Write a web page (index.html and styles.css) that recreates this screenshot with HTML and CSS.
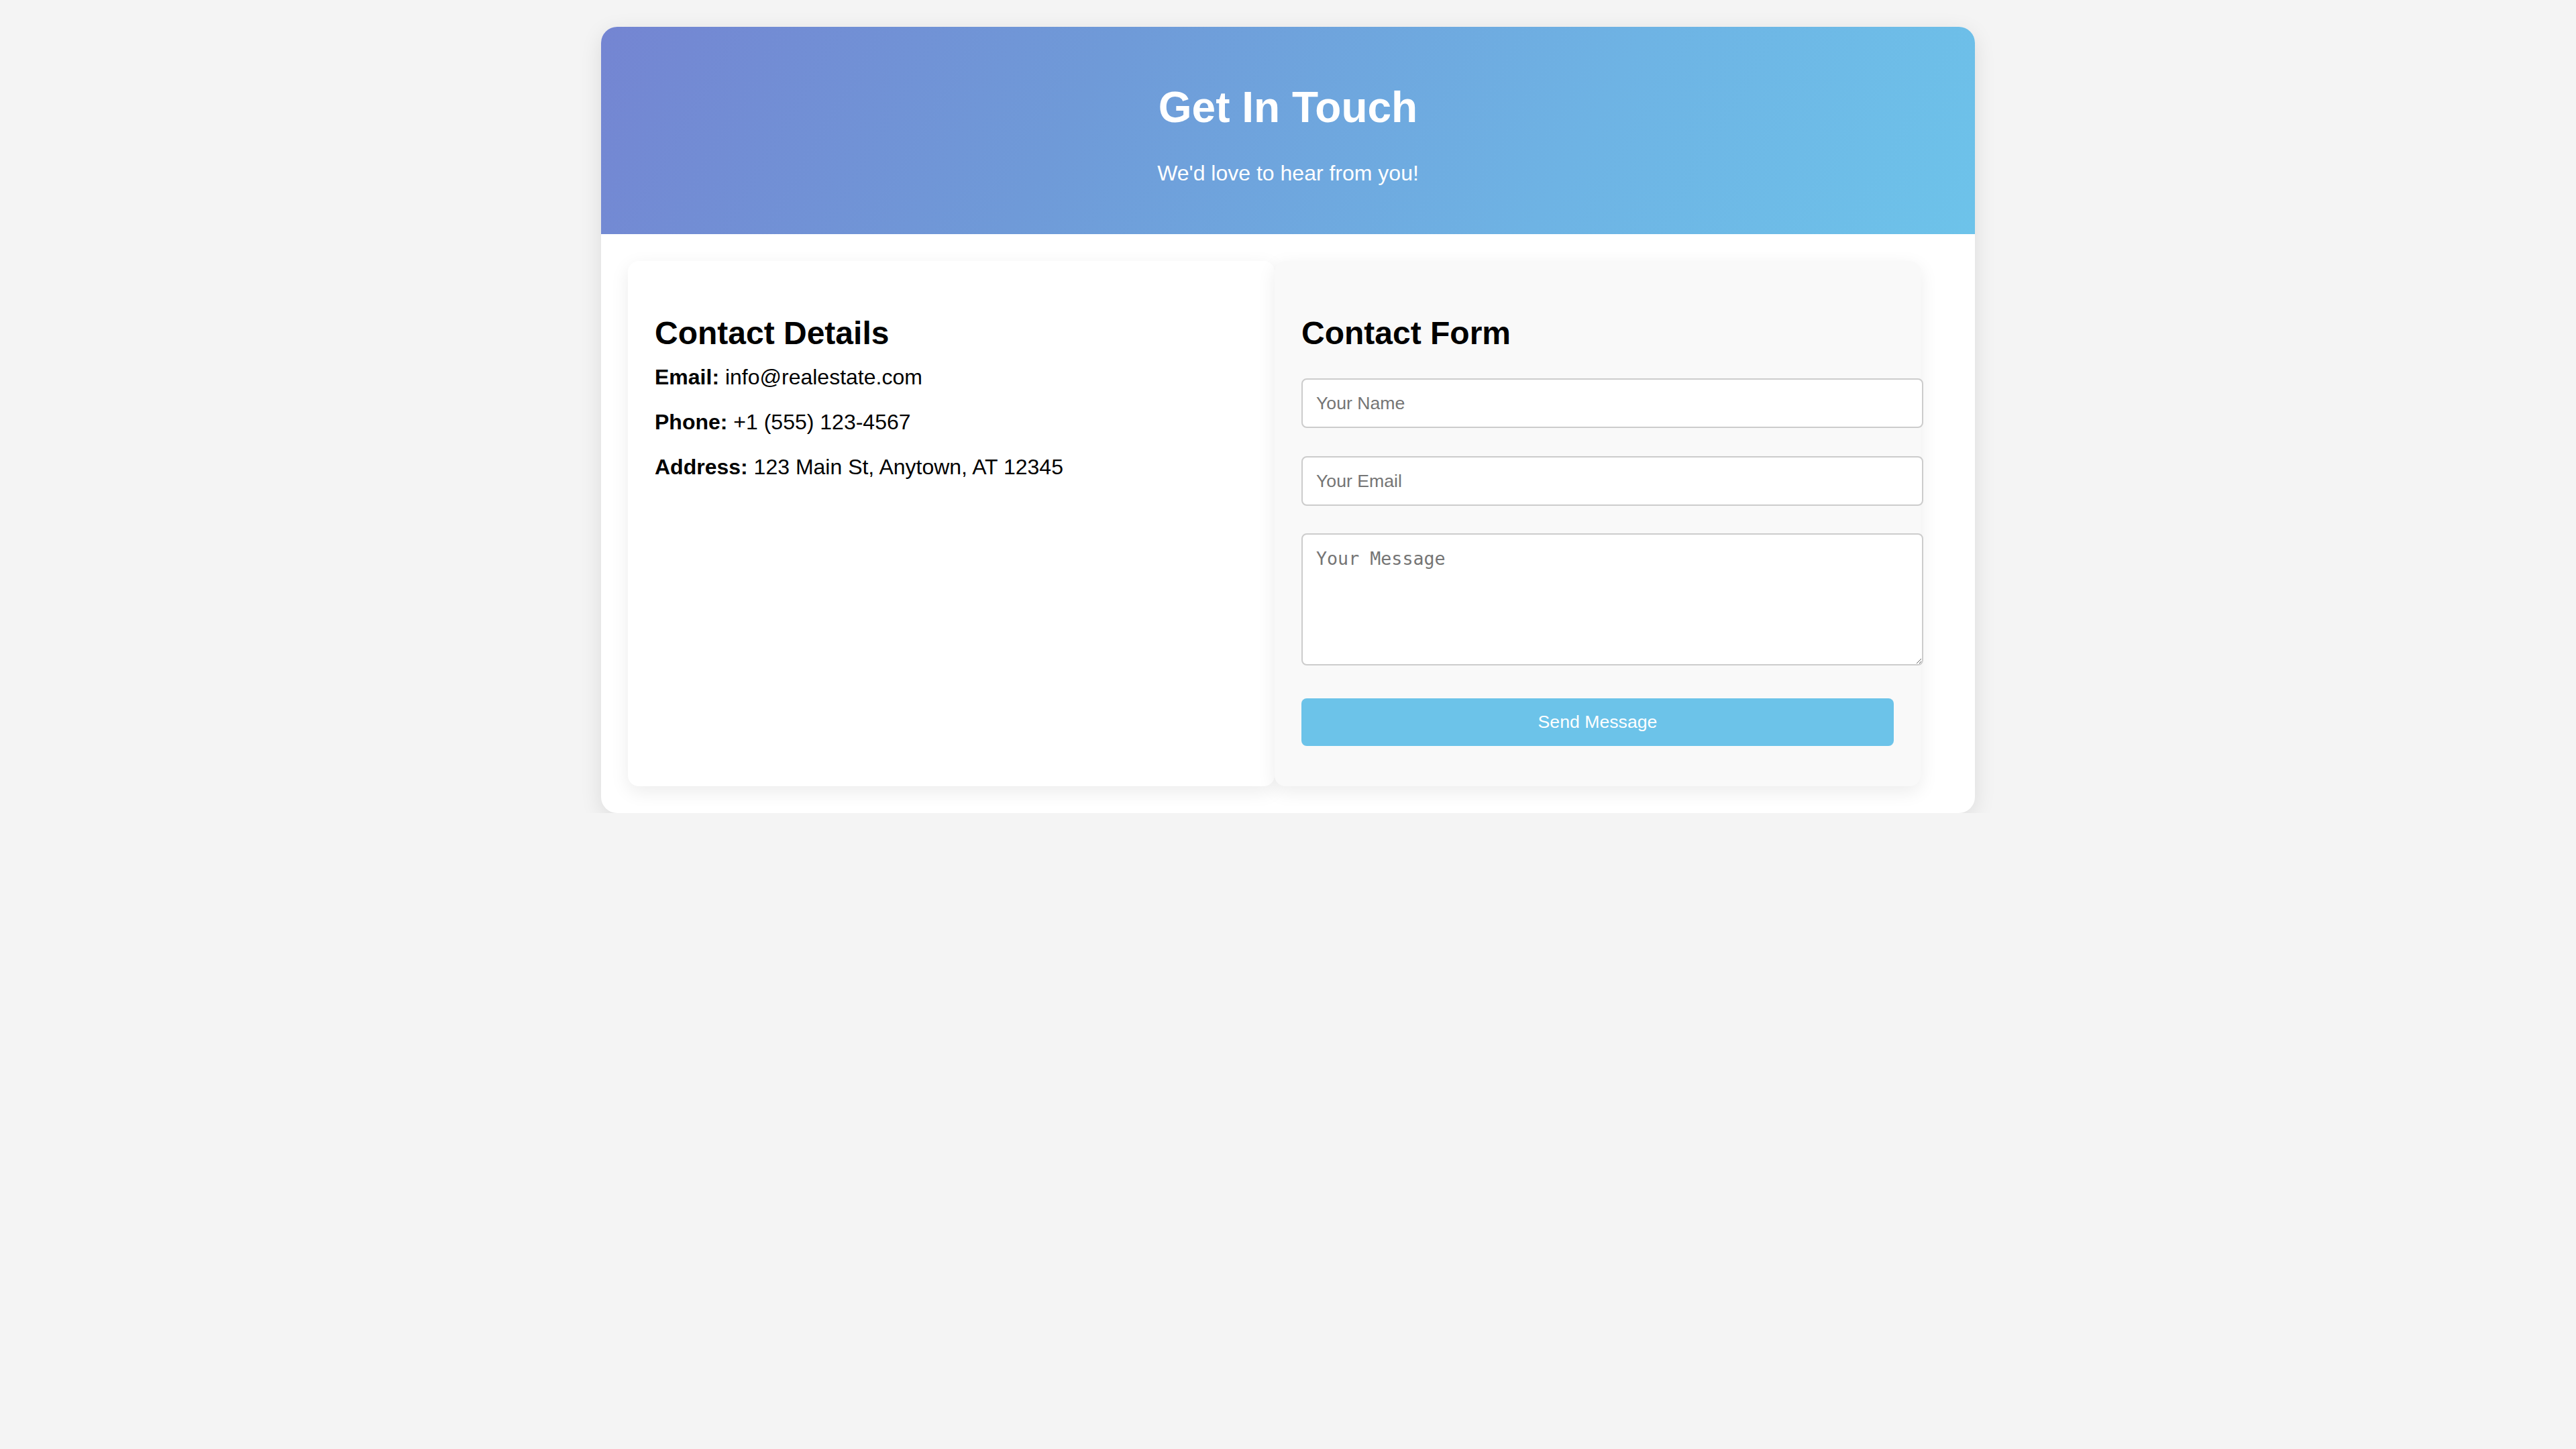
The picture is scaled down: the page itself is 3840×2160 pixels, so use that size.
FILE: index.html
```html
<!DOCTYPE html>
<html lang="en">
<head>
<meta charset="utf-8">
<title>Get In Touch</title>
<link rel="stylesheet" href="styles.css">
</head>
<body>
<div class="container">
  <header class="hero">
    <h1 class="hero-title">Get In Touch</h1>
    <p class="hero-sub">We'd love to hear from you!</p>
  </header>
  <div class="content">
    <section class="card details">
      <h2 class="card-title">Contact Details</h2>
      <p class="detail"><strong>Email:</strong> info@realestate.com</p>
      <p class="detail"><strong>Phone:</strong> +1 (555) 123-4567</p>
      <p class="detail"><strong>Address:</strong> 123 Main St, Anytown, AT 12345</p>
    </section>
    <section class="card form-card">
      <h2 class="card-title">Contact Form</h2>
      <form class="form">
        <input class="field field-name" type="text" placeholder="Your Name">
        <input class="field field-email" type="email" placeholder="Your Email">
        <textarea class="field field-msg" placeholder="Your Message"></textarea>
        <button class="send" type="button">Send Message</button>
      </form>
    </section>
  </div>
</div>
</body>
</html>
```

FILE: styles.css
```css
html, body {
  margin: 0;
  padding: 0;
}

body {
  background: #f4f4f4;
  font-family: "Liberation Sans", Arial, Helvetica, sans-serif;
  font-size: 32px;
  color: #000;
}

.container {
  width: 2048px;
  margin: 40px auto 0;
  background: #fff;
  border-radius: 24px;
  overflow: hidden;
  box-shadow: 0 8px 32px rgba(0, 0, 0, 0.1);
}

.hero {
  padding: 40px;
  text-align: center;
  color: #fff;
  background: linear-gradient(120deg, #7485d2 0%, #6f9ad8 35%, #6eb3e4 70%, #6dc3ea 100%);
}

.hero-title {
  margin: 43px 0;
  font-size: 64px;
  font-weight: bold;
  line-height: normal;
}

.hero-sub {
  margin: 32px 0;
  font-size: 32px;
}

.content {
  display: flex;
  padding: 40px;
}

.card {
  width: 964px;
  box-sizing: border-box;
  padding: 40px;
  border-radius: 16px;
  box-shadow: 0 8px 28px rgba(0, 0, 0, 0.08);
}

.details {
  background: #fff;
}

.form-card {
  background: #f9f9f9;
  width: 963px;
}

.card-title {
  margin: 40px 0 20px;
  font-size: 48px;
  font-weight: bold;
  line-height: normal;
}

.detail {
  margin: 0 0 30px;
  font-size: 32px;
  line-height: normal;
}

.form {
  display: flex;
  flex-direction: column;
  margin-top: 40px;
}

.field {
  box-sizing: content-box;
  width: 100%;
  padding: 20px;
  border: 2px solid #ccc;
  border-radius: 8px;
  background: #fff;
  color: #000;
  outline: none;
}

.field::placeholder {
  color: #757575;
}

.field-name,
.field-email {
  height: 30px;
  font: 26.67px "Liberation Sans", Arial, sans-serif;
  margin: 0 0 42px;
}

.field-email {
  margin-bottom: 41px;
}

.field-msg {
  height: 153px;
  font: 26.67px "DejaVu Sans Mono", monospace;
  margin: 0 0 49px;
  resize: both;
}

.send {
  width: 100%;
  height: 71px;
  margin: 0 0 20px;
  padding: 20px;
  border: none;
  border-radius: 8px;
  background: #6cc3e9;
  color: #fff;
  font: 26.67px "Liberation Sans", Arial, sans-serif;
  cursor: pointer;
}
```
